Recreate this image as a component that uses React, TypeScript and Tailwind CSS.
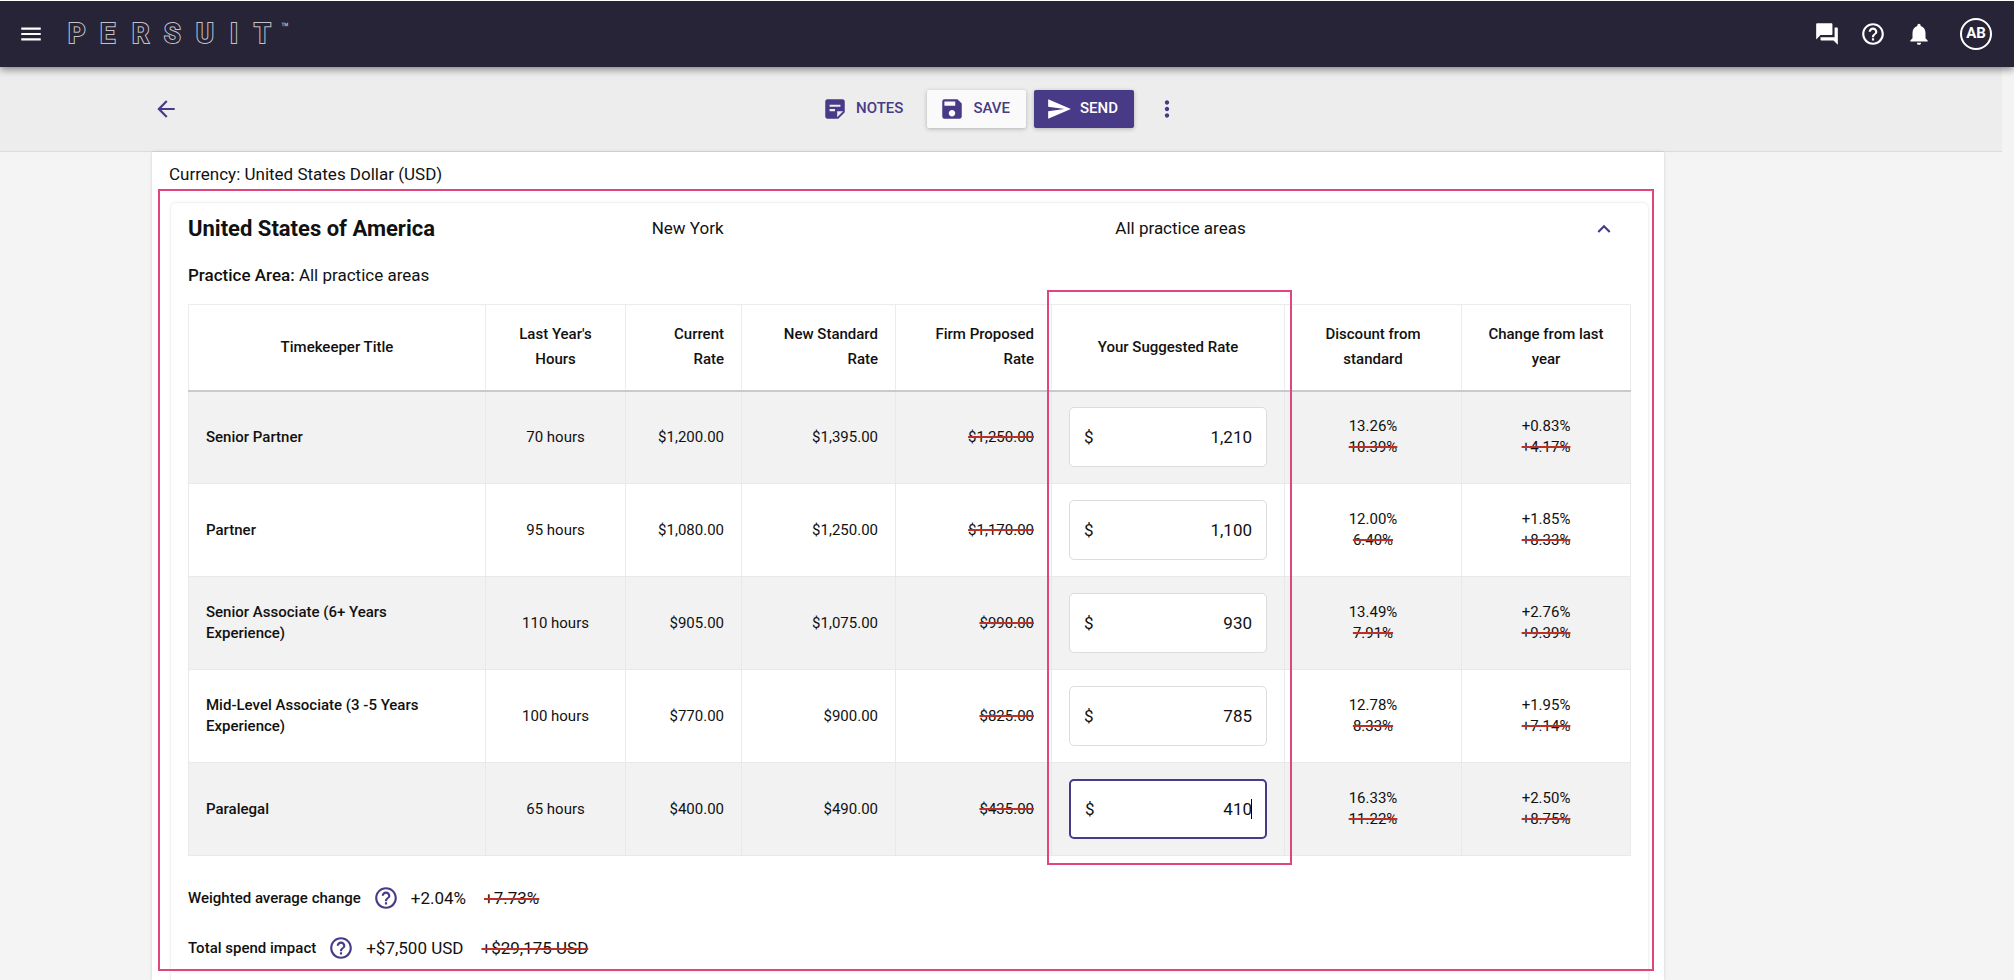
import React from "react";
import clsx from "clsx";
import {
  MdArrowBack,
  MdForum,
  MdHelpOutline,
  MdKeyboardArrowUp,
  MdMenu,
  MdMoreVert,
  MdNotifications,
  MdSave,
  MdSend,
  MdStickyNote2,
} from "react-icons/md";

interface Rate {
  title: string;
  hours: string;
  current: string;
  standard: string;
  proposed: string;
  suggested: string;
  discount: [string, string];
  change: [string, string];
  active?: boolean;
}

const rates: Rate[] = [
  {
    title: "Senior Partner",
    hours: "70 hours",
    current: "$1,200.00",
    standard: "$1,395.00",
    proposed: "$1,250.00",
    suggested: "1,210",
    discount: ["13.26%", "10.39%"],
    change: ["+0.83%", "+4.17%"],
  },
  {
    title: "Partner",
    hours: "95 hours",
    current: "$1,080.00",
    standard: "$1,250.00",
    proposed: "$1,170.00",
    suggested: "1,100",
    discount: ["12.00%", "6.40%"],
    change: ["+1.85%", "+8.33%"],
  },
  {
    title: "Senior Associate (6+ Years Experience)",
    hours: "110 hours",
    current: "$905.00",
    standard: "$1,075.00",
    proposed: "$990.00",
    suggested: "930",
    discount: ["13.49%", "7.91%"],
    change: ["+2.76%", "+9.39%"],
  },
  {
    title: "Mid-Level Associate (3 -5 Years Experience)",
    hours: "100 hours",
    current: "$770.00",
    standard: "$900.00",
    proposed: "$825.00",
    suggested: "785",
    discount: ["12.78%", "8.33%"],
    change: ["+1.95%", "+7.14%"],
  },
  {
    title: "Paralegal",
    hours: "65 hours",
    current: "$400.00",
    standard: "$490.00",
    proposed: "$435.00",
    suggested: "410",
    discount: ["16.33%", "11.22%"],
    change: ["+2.50%", "+8.75%"],
    active: true,
  },
];

function Logo() {
  return (
    <svg width="240" height="40" viewBox="0 0 240 40" aria-label="PERSUIT">
      {/* the fill goes over the inner half of the stroke, leaving an outline */}
      <text
        x="0 32 64 96 128 162 186"
        y="29"
        fill="#272437"
        stroke="#c4c3cb"
        strokeWidth="2"
        paintOrder="stroke"
        className="font-bold text-[27px]"
      >
        PERSUIT
      </text>
      <text x="213" y="18" fill="#cfced5" className="text-[13px]">
        ™
      </text>
    </svg>
  );
}

function Header() {
  return (
    <header className="relative z-10 flex h-[67px] shrink-0 items-center border-t border-white bg-[#272437] pr-[22px] pb-px pl-[18px] text-white shadow-[0_2px_8px_rgba(0,0,0,0.5)]">
      <button aria-label="Menu" className="mr-6">
        <MdMenu size={26} />
      </button>
      <Logo />
      <div className="ml-auto flex items-center gap-5">
        <button aria-label="Messages">
          <MdForum size={26} />
        </button>
        <button aria-label="Help">
          <MdHelpOutline size={26} />
        </button>
        <button aria-label="Notifications">
          <MdNotifications size={26} />
        </button>
        <button className="ml-2 flex size-8 items-center justify-center rounded-full border-2 border-white text-[15px] font-bold">
          AB
        </button>
      </div>
    </header>
  );
}

function Toolbar() {
  return (
    <div className="mr-3 grid h-[85px] shrink-0 grid-cols-[1fr_auto_1fr] items-center border-b border-[#dcdcdc] bg-[#ededed] pb-px text-[15px] font-medium text-[#493a87]">
      <button aria-label="Back" className="ml-[153px] justify-self-start">
        <MdArrowBack size={26} />
      </button>
      <div className="flex items-center">
        <button className="mr-4 flex h-[38px] items-center gap-2 px-2">
          <MdStickyNote2 size={26} />
          NOTES
        </button>
        <button className="mr-2 flex h-[38px] items-center gap-2 rounded-xs bg-[#fafafa] pr-4 pl-3 shadow-[0_1px_4px_rgba(0,0,0,0.25)]">
          <MdSave size={26} />
          SAVE
        </button>
        <button className="mr-3 flex h-[38px] items-center gap-2 rounded-xs bg-[#493a87] pr-4 pl-3 text-white shadow-[0_1px_4px_rgba(0,0,0,0.25)]">
          <MdSend size={26} />
          SEND
        </button>
        <button aria-label="More" className="px-2">
          <MdMoreVert size={26} />
        </button>
      </div>
    </div>
  );
}

function Struck({ children }: { children: React.ReactNode }) {
  return (
    <s className="decoration-[#bb3029] decoration-2">{children}</s>
  );
}

function RateInput({ rate }: { rate: Rate }) {
  return (
    <label
      className={clsx(
        "flex h-[60px] items-center rounded-[5px] bg-white px-[14px] text-[17px]",
        rate.active
          ? "border-2 border-[#493a87]"
          : "border border-[#dcdcdc]"
      )}
    >
      $
      <input
        aria-label={rate.title}
        defaultValue={rate.suggested}
        className="w-full min-w-0 bg-transparent text-right caret-transparent outline-none"
      />
      {rate.active && <span className="-mx-px h-5 w-px shrink-0 bg-black" />}
    </label>
  );
}

function Th({ className, children }: React.HTMLAttributes<HTMLElement>) {
  return (
    <th
      className={clsx(
        "border-x border-[#ececec] px-[17px] leading-[25px] font-medium",
        className
      )}
    >
      {children}
    </th>
  );
}

function Td({ className, children }: React.HTMLAttributes<HTMLElement>) {
  return (
    <td className={clsx("border border-[#e9e9e9] px-[17px]", className)}>
      {children}
    </td>
  );
}

function RatesTable() {
  return (
    <table className="w-full table-fixed border-collapse text-[15px] leading-[21px]">
      <colgroup>
        <col />
        <col className="w-[140px]" />
        <col className="w-[116px]" />
        <col className="w-[154px]" />
        <col className="w-[156px]" />
        <col className="w-[233px]" />
        <col className="w-[177px]" />
        <col className="w-[169px]" />
      </colgroup>
      <thead>
        <tr className="h-[86px] border-t border-b-2 border-t-[#ececec] border-b-[#cacace]">
          <Th>Timekeeper Title</Th>
          <Th>Last Year's Hours</Th>
          <Th className="text-right">Current Rate</Th>
          <Th className="text-right">New Standard Rate</Th>
          <Th className="text-right">Firm Proposed Rate</Th>
          <Th>Your Suggested Rate</Th>
          <Th>Discount from standard</Th>
          <Th>Change from last year</Th>
        </tr>
      </thead>
      <tbody>
        {rates.map((rate) => (
          <tr key={rate.title} className="h-[93px] odd:bg-[#f2f2f2]">
            <Td className="pr-10 font-medium">{rate.title}</Td>
            <Td className="text-center">{rate.hours}</Td>
            <Td className="text-right">{rate.current}</Td>
            <Td className="text-right">{rate.standard}</Td>
            <Td className="text-right">
              <Struck>{rate.proposed}</Struck>
            </Td>
            <Td>
              <RateInput rate={rate} />
            </Td>
            <Td className="text-center">
              <p>{rate.discount[0]}</p>
              <Struck>{rate.discount[1]}</Struck>
            </Td>
            <Td className="text-center">
              <p>{rate.change[0]}</p>
              <Struck>{rate.change[1]}</Struck>
            </Td>
          </tr>
        ))}
      </tbody>
    </table>
  );
}

interface SummaryProps {
  label: string;
  value: string;
  previous: string;
}

function Summary({ label, value, previous }: SummaryProps) {
  return (
    <div className="flex items-center text-[17px] leading-[26px]">
      <span className="text-[15px] font-medium">{label}</span>
      <button aria-label="Help" className="mx-3 text-[#493a87]">
        <MdHelpOutline size={26} />
      </button>
      <span className="mr-[18px]">{value}</span>
      <Struck>{previous}</Struck>
    </div>
  );
}

export default function App() {
  return (
    <div className="flex h-screen flex-col overflow-hidden bg-[#f4f4f4] font-[Roboto,sans-serif] text-[#111]">
      <Header />
      <Toolbar />
      <main className="mr-3 min-h-0 flex-1 pl-[152px]">
        <div className="h-full w-full max-w-[1512px] bg-white pt-[9px] pr-4 pl-[17px] shadow-[0_0_3px_rgba(0,0,0,0.15)]">
          <p className="text-[17px] leading-[26px]">
            Currency: United States Dollar (USD)
          </p>
          <section className="relative mt-4 ml-[2px] rounded-t-[5px] px-[17px] pb-[10px] shadow-[0_0_3px_rgba(0,0,0,0.15)]">
            <div className="pointer-events-none absolute -top-[14px] -right-[6px] bottom-0 -left-[13px] border-2 border-[#e0457f]" />
            <div className="grid grid-cols-[1fr_1fr_1fr_38px] items-center pt-[9px] pr-[14px] text-[17px]">
              <h2 className="text-[22px] leading-[34px] font-bold">
                United States of America
              </h2>
              <span>New York</span>
              <span>All practice areas</span>
              <button
                aria-label="Collapse"
                className="justify-self-end text-[#493a87]"
              >
                <MdKeyboardArrowUp size={26} />
              </button>
            </div>
            <p className="my-4 text-[17px] leading-[26px]">
              <b className="font-medium">Practice Area:</b> All practice areas
            </p>
            <div className="relative">
              <RatesTable />
              <div className="pointer-events-none absolute -top-[14px] right-[339px] -bottom-[9px] w-[245px] border-2 border-[#e0457f]" />
            </div>
            <div className="mt-[29px] flex flex-col gap-6">
              <Summary
                label="Weighted average change"
                value="+2.04%"
                previous="+7.73%"
              />
              <Summary
                label="Total spend impact"
                value="+$7,500 USD"
                previous="+$29,175 USD"
              />
            </div>
          </section>
          <div className="ml-[2px] h-10 shadow-[0_0_3px_rgba(0,0,0,0.15)]" />
        </div>
      </main>
    </div>
  );
}
